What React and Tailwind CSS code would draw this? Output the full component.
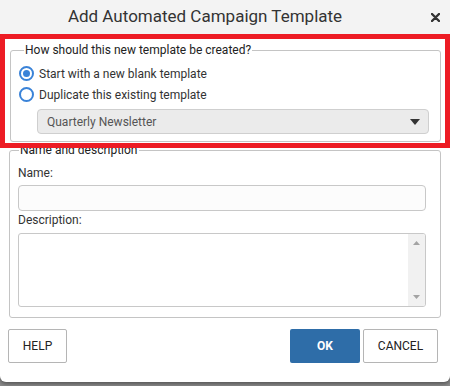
import React from 'react';

function Radio({ checked }) {
  return (
    <span className="flex h-[15px] w-[15px] items-center justify-center rounded-full border-2 border-[#3a83d8] bg-white">
      {checked && <span className="h-[7px] w-[7px] rounded-full bg-[#3a83d8]" />}
    </span>
  );
}

export default function App() {
  return (
    <div
      className="relative h-[386px] w-[450px] overflow-hidden bg-[#8c8c8c]"
      style={{ fontFamily: 'Roboto, "Liberation Sans", sans-serif' }}
    >
      <div className="h-[382px] w-[450px] rounded-b-[6px] bg-white shadow-[0_2px_4px_rgba(0,0,0,0.4)]">
        {/* Title bar */}
        <div className="relative flex h-[34px] items-center justify-center bg-[#f3f3f3] pr-[40px] text-[17px] text-[#333]">
          Add Automated Campaign Template
          <svg className="absolute right-[10px] top-[13px]" width="9" height="9" viewBox="0 0 9 9">
            <path d="M1 1 L8 8 M8 1 L1 8" stroke="#333" strokeWidth="2.4" strokeLinecap="round" />
          </svg>
        </div>

        <div className="px-[9px] pt-[9px] text-[12px] text-[#333]">
          {/* Creation method */}
          <fieldset className="ml-[1px] rounded-[3px] border border-[#c4c4c4] px-[8px] pb-[7px] pt-[6px]">
            <legend className="ml-[5px] px-[1px] text-[12px] leading-[14px] text-[#222]">
              How should this new template be created?
            </legend>
            <label className="flex h-[21px] items-center gap-[5px]">
              <Radio checked />
              <span>Start with a new blank template</span>
            </label>
            <label className="flex h-[21px] items-center gap-[5px]">
              <Radio />
              <span>Duplicate this existing template</span>
            </label>
            <div className="mt-[4px] ml-[18px] mr-[3px] flex h-[25px] items-center justify-between rounded-[4px] border border-[#cfcfcf] bg-[#ebebeb] pl-[9px] pr-[8px] text-[#555]">
              <span>Quarterly Newsletter</span>
              <svg width="10" height="6" viewBox="0 0 10 6">
                <path d="M0 0 L10 0 L5 6 Z" fill="#333" />
              </svg>
            </div>
          </fieldset>

          {/* Name and description */}
          <fieldset className="mt-[1px] rounded-[3px] border border-[#c4c4c4] pb-[10px] pl-[8px] pr-[14px] pt-[8px]">
            <legend className="ml-[1px] px-[1px] text-[12px] leading-[14px] text-[#222]">
              Name and description
            </legend>
            <div className="leading-[16px]">Name:</div>
            <div className="mt-[4px] h-[26px] rounded-[4px] border border-[#c8c8c8] bg-[#fcfcfc]" />
            <div className="mt-[1px] leading-[16px]">Description:</div>
            <div className="mt-[5px] flex h-[74px] overflow-hidden rounded-[3px] border border-[#c8c8c8] bg-white">
              <div className="flex-1" />
              <div className="flex w-[17px] flex-col items-center justify-between bg-[#f1f1f1] py-[7px]">
                <svg width="7" height="4" viewBox="0 0 7 4">
                  <path d="M0 4 L7 4 L3.5 0 Z" fill="#a3a3a3" />
                </svg>
                <svg width="7" height="4" viewBox="0 0 7 4">
                  <path d="M0 0 L7 0 L3.5 4 Z" fill="#a3a3a3" />
                </svg>
              </div>
            </div>
          </fieldset>

          {/* Buttons */}
          <div className="mt-[11px] flex items-center justify-between pr-[3px]">
            <button className="-ml-[1px] h-[34px] w-[59px] rounded-[2px] border border-[#b5b5b5] bg-white text-[12px] text-[#222]">
              HELP
            </button>
            <div className="flex gap-[3px]">
              <button className="h-[34px] w-[70px] rounded-[2px] bg-[#2e6da8] text-[12px] font-bold text-white">
                OK
              </button>
              <button className="h-[34px] w-[75px] rounded-[2px] border border-[#b5b5b5] bg-white text-[12px] text-[#222]">
                CANCEL
              </button>
            </div>
          </div>
        </div>
      </div>

      {/* Highlight overlay */}
      <div className="pointer-events-none absolute left-0 top-[34px] h-[114px] w-[450px] border-[5px] border-[#ed1c24]" />
    </div>
  );
}
